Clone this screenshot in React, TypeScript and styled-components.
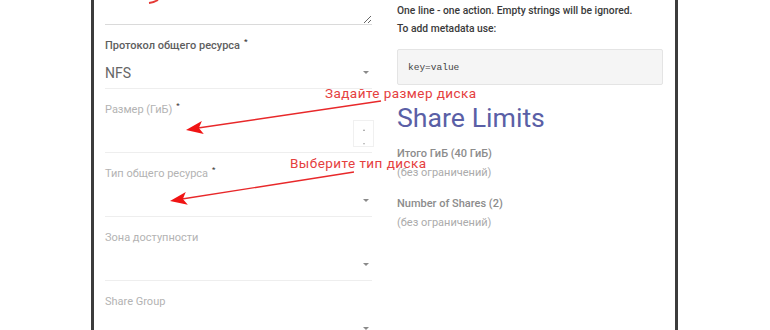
import React from "react";
import styled, { createGlobalStyle } from "styled-components";

const GlobalStyle = createGlobalStyle`
  html, body { margin: 0; padding: 0; background: #ffffff; }
  body { font-family: Roboto, "Noto Sans", Arial, sans-serif; overflow: hidden; }
  * { box-sizing: border-box; }
`;

const Page = styled.div`
  position: relative;
  width: 770px;
  height: 330px;
  overflow: hidden;
`;

const Frame = styled.div`
  margin-left: 91px;
  width: 587px;
  height: 330px;
  border-left: 3px solid #3c3c3c;
  border-right: 3px solid #3c3c3c;
  padding: 0 13px 0 11px;
  display: grid;
  grid-template-columns: 267px 266px;
  column-gap: 25px;
  align-items: start;
`;

const Column = styled.div`
  display: flex;
  flex-direction: column;
`;

const TextArea = styled.textarea`
  display: block;
  width: 100%;
  height: 25px;
  border: none;
  border-bottom: 1px solid #dadada;
  resize: vertical;
  outline: none;
  background: transparent;
  font: inherit;
`;

const FieldBox = styled.div`
  padding-top: 14px;
  border-bottom: 1px solid #eeeeee;
`;

const Label = styled.div<{ $filled?: boolean }>`
  font-size: 11px;
  line-height: 14px;
  height: 14px;
  font-weight: ${(p) => (p.$filled ? 500 : 400)};
  color: ${(p) => (p.$filled ? "#5e5e5e" : "#b3b3b3")};
  white-space: nowrap;
`;

const Req = styled.span`
  display: inline-block;
  margin-left: 4px;
  font-size: 8px;
  line-height: 6px;
  color: #333;
  vertical-align: top;
`;

const Control = styled.div`
  height: 35px;
  padding-top: 8px;
  padding-bottom: 4px;
  display: flex;
  align-items: center;
  justify-content: space-between;
`;

const Value = styled.span`
  font-size: 14px;
  color: #666;
`;

const Caret = styled.span`
  width: 0;
  height: 0;
  margin-right: 3px;
  border-left: 3px solid transparent;
  border-right: 3px solid transparent;
  border-top: 3px solid #8a8a8a;
`;

const Spinner = styled.div`
  align-self: flex-start;
  margin-top: -5px;
  width: 21px;
  height: 27px;
  border: 1px solid #f0f0f0;
  display: flex;
  flex-direction: column;
  align-items: center;
  justify-content: space-between;
  padding: 8px 0 1px;
  margin-right: -2px;
`;

const SpinMark = styled.span<{ $down?: boolean }>`
  width: 0;
  height: 0;
  border-left: 1.5px solid transparent;
  border-right: 1.5px solid transparent;
  ${(p) =>
    p.$down
      ? "border-top: 2px solid #b0b0b0;"
      : "border-bottom: 2px solid #999;"}
`;

const Help = styled.div`
  padding-top: 2px;
  font-size: 10.3px;
  line-height: 18px;
  font-weight: 500;
  color: #3a3a3a;
  white-space: nowrap;
`;

const CodeBox = styled.div`
  margin-top: 11px;
  height: 36px;
  background: #f5f5f5;
  border: 1px solid #e4e4e4;
  border-radius: 2px;
  padding-left: 10px;
  display: flex;
  align-items: center;
  font-family: "Liberation Mono", "DejaVu Sans Mono", monospace;
  font-size: 9.5px;
  color: #444;
`;

const Heading = styled.h2`
  margin: 18px 0 0;
  font-size: 26.7px;
  line-height: 30px;
  font-weight: 400;
  color: #5a5fa6;
`;

const LimitList = styled.div`
  margin-top: 11px;
  display: flex;
  flex-direction: column;
  gap: 12px;
`;

const Limit = styled.div`
  display: flex;
  flex-direction: column;
  font-size: 11px;
  line-height: 19px;
`;

const LimitName = styled.span`
  font-weight: 500;
  color: #8c8c8c;
`;

const LimitValue = styled.span`
  color: #ababab;
`;

const Overlay = styled.svg`
  position: absolute;
  left: 0;
  top: 0;
  pointer-events: none;
`;

const Note = styled.div<{ $x: number; $y: number }>`
  position: absolute;
  left: ${(p) => p.$x}px;
  top: ${(p) => p.$y}px;
  font-size: 13.5px;
  line-height: 18px;
  letter-spacing: 0.45px;
  color: #e5403e;
  white-space: nowrap;
`;

type FieldProps = {
  label: string;
  required?: boolean;
  value?: string;
  kind?: "select" | "number";
};

const Field = ({ label, required, value, kind = "select" }: FieldProps) => (
  <FieldBox>
    <Label $filled={!!value}>
      {label}
      {required && <Req>*</Req>}
    </Label>
    <Control>
      <Value>{value ?? ""}</Value>
      {kind === "select" ? (
        <Caret />
      ) : (
        <Spinner>
          <SpinMark />
          <SpinMark $down />
        </Spinner>
      )}
    </Control>
  </FieldBox>
);

const arrowHead = (tx: number, ty: number, sx: number, sy: number) => {
  const dx = sx - tx;
  const dy = sy - ty;
  const len = Math.hypot(dx, dy);
  const ux = dx / len;
  const uy = dy / len;
  const px = -uy;
  const py = ux;
  const L = 17;
  const W = 6.5;
  const N = 13;
  const b1 = [tx + ux * L + px * W, ty + uy * L + py * W];
  const b2 = [tx + ux * L - px * W, ty + uy * L - py * W];
  const n = [tx + ux * N, ty + uy * N];
  return `M${tx},${ty} L${b1[0]},${b1[1]} L${n[0]},${n[1]} L${b2[0]},${b2[1]} Z`;
};

export default function App() {
  return (
    <>
      <GlobalStyle />
      <Page>
        <Frame>
          <Column>
            <TextArea aria-label="metadata" />
            <Field label="Протокол общего ресурса" required value="NFS" />
            <Field label="Размер (ГиБ)" required kind="number" />
            <Field label="Тип общего ресурса" required />
            <Field label="Зона доступности" />
            <Field label="Share Group" />
          </Column>
          <Column>
            <Help>
              One line - one action. Empty strings will be ignored.
              <br />
              To add metadata use:
            </Help>
            <CodeBox>key=value</CodeBox>
            <Heading>Share Limits</Heading>
            <LimitList>
              <Limit>
                <LimitName>Итого ГиБ (40 ГиБ)</LimitName>
                <LimitValue>(без ограничений)</LimitValue>
              </Limit>
              <Limit>
                <LimitName>Number of Shares (2)</LimitName>
                <LimitValue>(без ограничений)</LimitValue>
              </Limit>
            </LimitList>
          </Column>
        </Frame>
        <Overlay width={770} height={330} viewBox="0 0 770 330">
          <path d="M149,3 Q154,2.5 158,0" stroke="#e53935" strokeWidth={2} fill="none" />
          <line x1={381} y1={101} x2={198} y2={128} stroke="#e8282a" strokeWidth={1.4} />
          <path d={arrowHead(186, 130, 381, 101)} fill="#f01414" />
          <line x1={354} y1={172} x2={182} y2={199} stroke="#e8282a" strokeWidth={1.4} />
          <path d={arrowHead(170, 201, 354, 172)} fill="#f01414" />
        </Overlay>
        <Note $x={325} $y={84}>Задайте размер диска</Note>
        <Note $x={290} $y={154}>Выберите тип диска</Note>
      </Page>
    </>
  );
}
